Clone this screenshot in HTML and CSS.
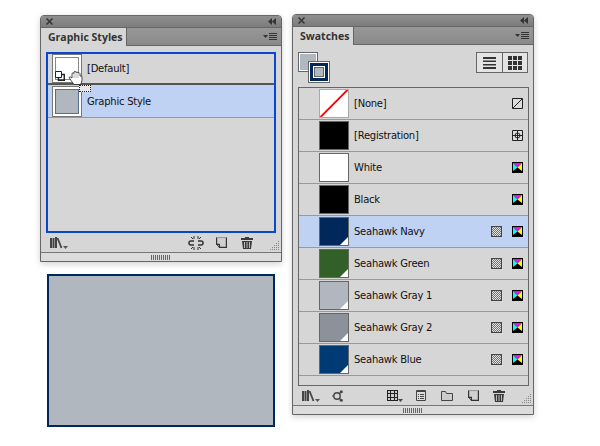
FILE: index.html
```html
<!DOCTYPE html>
<html lang="en">
<head>
<meta charset="utf-8">
<title>Graphic Styles and Swatches</title>
<link rel="stylesheet" href="styles.css">
</head>
<body>
<svg class="defs" width="0" height="0" aria-hidden="true">
  <symbol id="i-lib" viewBox="0 0 18 12"><path fill="#444" d="M0 1h2v10H0zM2.500 1h2v10h-2zM5 0h2v11H5z"/><path fill="none" stroke="#444" stroke-width="1.800" d="M7.500 1l4 10"/><path fill="#555" d="M13 9h5l-2.500 3z"/></symbol>
  <symbol id="i-new" viewBox="0 0 11 11"><path fill="#d0d0d0" stroke="#888" d="M.5 .5h10"/><path fill="#d0d0d0" stroke="#333" stroke-width="1.200" d="M.6 .6v6.800h2.800v3h7V.6"/><path fill="#d0d0d0" stroke="#333" d="M.6 7.400l3 3"/><path fill="none" stroke="#999" d="M1 .6h9"/></symbol>
  <symbol id="i-trash" viewBox="0 0 12 12"><path fill="#3a3a3a" d="M4 0h4v1h4v2H0V1h4z"/><path fill="#3a3a3a" d="M1 4h10l-1 8H2z"/><path fill="#bbb" d="M3 5h1v6H3zM5.500 5h1v6h-1zM8 5h1v6H8z"/></symbol>
  <symbol id="i-break" viewBox="0 0 16 14"><path fill="none" stroke="#333" stroke-width="1.500" d="M6 5H3Q1 5 1 7t2 2h3M10 5h3q2 0 2 2t-2 2h-3"/><path fill="none" stroke="#333" d="M6 0v3M10 0v3M6 11v3M10 11v3M3 1l2 2M13 1l-2 2M3 13l2-2M13 13l-2-2"/></symbol>
  <symbol id="i-cmyk" viewBox="0 0 11 11"><path fill="#000" d="M0 0h11v11H0z"/><path fill="#f0f" d="M1 1h9L5.500 5.500z"/><path fill="#0ff" d="M1 1v8l4.500-3.500z"/><path fill="#ff0" d="M10 1v8L5.500 5.500z"/></symbol>
  <symbol id="i-global" viewBox="0 0 11 11"><path fill="#444" d="M0 0h11v11H0z"/><path fill="#ddd" d="M1 1h9v9H1z"/><path fill="#777" d="M1 1h1v1H1zM3 1h1v1H3zM5 1h1v1H5zM7 1h1v1H7zM9 1h1v1H9zM2 2h1v1H2zM4 2h1v1H4zM6 2h1v1H6zM8 2h1v1H8zM1 3h1v1H1zM3 3h1v1H3zM5 3h1v1H5zM7 3h1v1H7zM9 3h1v1H9zM2 4h1v1H2zM4 4h1v1H4zM6 4h1v1H6zM8 4h1v1H8zM1 5h1v1H1zM3 5h1v1H3zM5 5h1v1H5zM7 5h1v1H7zM9 5h1v1H9zM2 6h1v1H2zM4 6h1v1H4zM6 6h1v1H6zM8 6h1v1H8zM1 7h1v1H1zM3 7h1v1H3zM5 7h1v1H5zM7 7h1v1H7zM9 7h1v1H9zM2 8h1v1H2zM4 8h1v1H4zM6 8h1v1H6zM8 8h1v1H8zM1 9h1v1H1zM3 9h1v1H3zM5 9h1v1H5zM7 9h1v1H7zM9 9h1v1H9z"/></symbol>
  <symbol id="i-menu" viewBox="0 0 14 7"><path fill="#333" d="M0 2h5L2.500 5zM6 0h8v1H6zM6 2h8v1H6zM6 4h8v1H6zM6 6h8v1H6z"/></symbol>
  <symbol id="i-x" viewBox="0 0 7 7"><path fill="none" stroke="#333" stroke-width="1.500" d="M.5 .5l6 6M6.500 .5l-6 6"/></symbol>
  <symbol id="i-col" viewBox="0 0 8 7"><path fill="#333" d="M4 0v7L0 3.500zM8 0v7L4 3.500z"/></symbol>
  <symbol id="i-corner" viewBox="0 0 10 10"><path fill="#888" d="M8 0h1v1H8zM6 2h1v1H6zM8 2h1v1H8zM4 4h1v1H4zM6 4h1v1H6zM8 4h1v1H8zM2 6h1v1H2zM4 6h1v1H4zM6 6h1v1H6zM8 6h1v1H8zM0 8h1v1H0zM2 8h1v1H2zM4 8h1v1H4zM6 8h1v1H6zM8 8h1v1H8z"/></symbol>
  <symbol id="i-grip" viewBox="0 0 20 5"><path fill="#666" d="M0 0h1v5H0zM2 0h1v5H2zM4 0h1v5H4zM6 0h1v5H6zM8 0h1v5H8zM10 0h1v5h-1zM12 0h1v5h-1zM14 0h1v5h-1zM16 0h1v5h-1zM18 0h1v5h-1z"/></symbol>
</svg>

<main class="stage">
  <div class="col-left">
    <section class="panel panel-styles">
      <div class="titlebar"><svg class="tb-x"><use href="#i-x"/></svg><svg class="tb-col"><use href="#i-col"/></svg></div>
      <div class="tabrow"><div class="tab tab-styles">Graphic Styles</div><svg class="tab-menu"><use href="#i-menu"/></svg></div>
      <div class="styles-box">
        <div class="style-row style-default">
          <div class="style-thumb"><div class="style-inner"></div>
            <svg class="thumb-badge" viewBox="0 0 10 10"><path fill="#fff" stroke="#222" d="M.5 .5h6v6h-6z"/><path fill="none" stroke="#222" stroke-width="1.500" d="M7 3.500h2.300v5.800H3.500V7"/></svg>
          </div>
          <span class="style-name">[Default]</span>
        </div>
        <div class="style-row style-selected">
          <div class="style-thumb"><div class="style-inner style-inner-gray"></div></div>
          <span class="style-name">Graphic Style</span>
        </div>
        <svg class="hand" viewBox="0 0 16 16"><path fill="#fff" stroke="#222" stroke-width=".8" d="M1 8.500Q2 7 4 9V4.500q1-1.500 2 0V3q1-1.500 2 0v.5q1-1 2 0V4q1.500-.8 2 .5V7q2-.5 2 1v3q0 2-1.500 4.500H6Q4 13 1 8.500z"/><path fill="none" stroke="#999" stroke-width=".7" d="M6 4.500V9M8 3.500V9M10 4V9"/></svg>
        <div class="drag-ghost"></div>
      </div>
      <div class="footer footer-styles">
        <svg class="f-lib"><use href="#i-lib"/></svg>
        <svg class="f-break"><use href="#i-break"/></svg>
        <svg class="f-new"><use href="#i-new"/></svg>
        <svg class="f-trash"><use href="#i-trash"/></svg>
        <svg class="corner"><use href="#i-corner"/></svg>
      </div>
      <div class="strip"><svg class="grip"><use href="#i-grip"/></svg></div>
    </section>
    <div class="preview"></div>
  </div>

  <section class="panel panel-swatches">
    <div class="titlebar"><svg class="tb-x"><use href="#i-x"/></svg><svg class="tb-col"><use href="#i-col"/></svg></div>
    <div class="tabrow"><div class="tab tab-swatches">Swatches</div><svg class="tab-menu"><use href="#i-menu"/></svg></div>
    <div class="sw-top">
      <div class="fillstroke">
        <div class="fill-box"></div>
        <div class="stroke-box"><div class="stroke-hole"></div></div>
      </div>
      <div class="view-toggle">
        <div class="view-btn view-list">
          <svg viewBox="0 0 13 12" width="13" height="12"><path fill="#333" d="M0 0h13v2H0zM0 3.500h13v1.500H0zM0 7h13v1.500H0zM0 10h13v2H0z"/></svg>
        </div>
        <div class="view-btn">
          <svg viewBox="0 0 14 14" width="14" height="14"><path fill="#333" d="M0 0h4v4H0zM5 0h4v4H5zM10 0h4v4h-4zM0 5h4v4H0zM5 5h4v4H5zM10 5h4v4h-4zM0 10h4v4H0zM5 10h4v4H5zM10 10h4v4h-4z"/></svg>
        </div>
      </div>
    </div>
    <div class="sw-list">
      <div class="sw-row">
        <div class="sw-thumb sw-none"><svg viewBox="0 0 28 28"><path stroke="#f00" stroke-width="2" d="M0 28L28 0"/></svg></div>
        <span class="sw-name">[None]</span>
        <svg class="sw-icon" viewBox="0 0 11 11"><path fill="#ddd" stroke="#222" d="M.5 .5h10v10H.5z"/><path stroke="#222" d="M1 10L10 1"/></svg>
      </div>
      <div class="sw-row">
        <div class="sw-thumb sw-black"></div>
        <span class="sw-name">[Registration]</span>
        <svg class="sw-icon" viewBox="0 0 11 11"><path fill="#ddd" stroke="#222" d="M.5 .5h10v10H.5z"/><circle cx="5.500" cy="5.500" r="2.500" fill="none" stroke="#222"/><path stroke="#222" d="M5.500 1v9M1 5.500h9"/></svg>
      </div>
      <div class="sw-row">
        <div class="sw-thumb sw-white"></div>
        <span class="sw-name">White</span>
        <svg class="sw-icon"><use href="#i-cmyk"/></svg>
      </div>
      <div class="sw-row">
        <div class="sw-thumb sw-black"></div>
        <span class="sw-name">Black</span>
        <svg class="sw-icon"><use href="#i-cmyk"/></svg>
      </div>
      <div class="sw-row sw-selected">
        <div class="sw-thumb sw-navy sw-global"></div>
        <span class="sw-name">Seahawk Navy</span>
        <svg class="sw-icon sw-icon-g"><use href="#i-global"/></svg>
        <svg class="sw-icon"><use href="#i-cmyk"/></svg>
      </div>
      <div class="sw-row">
        <div class="sw-thumb sw-green sw-global"></div>
        <span class="sw-name">Seahawk Green</span>
        <svg class="sw-icon sw-icon-g"><use href="#i-global"/></svg>
        <svg class="sw-icon"><use href="#i-cmyk"/></svg>
      </div>
      <div class="sw-row">
        <div class="sw-thumb sw-gray1 sw-global"></div>
        <span class="sw-name">Seahawk Gray 1</span>
        <svg class="sw-icon sw-icon-g"><use href="#i-global"/></svg>
        <svg class="sw-icon"><use href="#i-cmyk"/></svg>
      </div>
      <div class="sw-row">
        <div class="sw-thumb sw-gray2 sw-global"></div>
        <span class="sw-name">Seahawk Gray 2</span>
        <svg class="sw-icon sw-icon-g"><use href="#i-global"/></svg>
        <svg class="sw-icon"><use href="#i-cmyk"/></svg>
      </div>
      <div class="sw-row">
        <div class="sw-thumb sw-blue sw-global"></div>
        <span class="sw-name">Seahawk Blue</span>
        <svg class="sw-icon sw-icon-g"><use href="#i-global"/></svg>
        <svg class="sw-icon"><use href="#i-cmyk"/></svg>
      </div>
    </div>
    <div class="footer footer-swatches">
      <svg class="f-lib"><use href="#i-lib"/></svg>
      <svg class="f-opts" viewBox="0 0 11 12"><circle cx="5" cy="6" r="3.200" fill="none" stroke="#444" stroke-width="1.400"/><path stroke="#444" stroke-width="1.200" d="M7 4l2-2M7 8l2 2M0 6h2"/><circle cx="9.300" cy="1.800" r="1.500" fill="#444"/><circle cx="9.300" cy="10.200" r="1.500" fill="#444"/></svg>
      <svg class="f-grid" viewBox="0 0 16 12"><path fill="#222" d="M0 0h11v11H0z"/><path fill="#ccc" d="M1 1h2v2H1zM4 1h3v2H4zM8 1h2v2H8zM1 4h2v3H1zM4 4h3v3H4zM8 4h2v3H8zM1 8h2v2H1zM4 8h3v2H4zM8 8h2v2H8z"/><path fill="#444" d="M11 9h5l-2.500 3z"/></svg>
      <svg class="f-list" viewBox="0 0 10 11"><path fill="#ddd" stroke="#444" d="M.5 .5h9v10h-9z"/><path fill="#444" d="M1 1h8v1H1zM2 4h1v1H2zM4 4h4v1H4zM2 6h1v1H2zM4 6h4v1H4zM2 8h1v1H2zM4 8h4v1H4z"/></svg>
      <svg class="f-folder" viewBox="0 0 12 10"><path fill="#ccc" stroke="#444" d="M.5 9.500V.5h4l1 2h6v7z"/></svg>
      <svg class="f-new"><use href="#i-new"/></svg>
      <svg class="f-trash"><use href="#i-trash"/></svg>
      <svg class="corner"><use href="#i-corner"/></svg>
    </div>
    <div class="strip"><svg class="grip"><use href="#i-grip"/></svg></div>
  </section>
</main>
</body>
</html>
```
FILE: styles.css
```css
* { box-sizing: border-box; }
html, body { margin: 0; padding: 0; background: #fff; }
body { width: 600px; height: 446px; overflow: hidden; font-family: "DejaVu Sans", sans-serif; font-size: 10px; color: #111; }
svg { display: block; }
.defs { position: absolute; }

.stage { display: flex; align-items: flex-start; padding: 14px 0 0 40px; gap: 10px; }
.col-left { display: flex; flex-direction: column; margin-top: 1px; width: 242px; }

.panel { width: 242px; background: #d6d6d6; border: 1px solid #666; border-radius: 4px 4px 0 0; box-shadow: 0 2px 6px rgba(0,0,0,.18); position: relative; }

.titlebar { height: 12px; background: linear-gradient(#8f8f8f, #7c7c7c); border-bottom: 1px solid #666; border-radius: 3px 3px 0 0; display: flex; justify-content: space-between; align-items: center; padding: 0 5px 0 5px; }
.tb-x { width: 7px; height: 7px; }
.tb-col { width: 8px; height: 7px; }

.tabrow { height: 18px; background: linear-gradient(#979797, #8a8a8a); border-bottom: 1px solid #666; display: flex; justify-content: space-between; align-items: center; padding-right: 4px; }
.tab { height: 18px; background: #d6d6d6; border-right: 1px solid #666; font-family: "Open Sans", sans-serif; font-weight: bold; font-size: 10.5px; color: #333; display: flex; align-items: center; padding-left: 7px; white-space: nowrap; }
.tab-styles { width: 86px; }
.tab-swatches { width: 61px; }
.tab-menu { width: 14px; height: 7px; }

.styles-box { position: relative; width: 230px; height: 181px; margin: 6px 0 0 5px; border: 2px solid #0a47cf; }
.style-row { display: flex; align-items: center; gap: 5px; padding-left: 4px; }
.style-default { height: 31px; border-bottom: 2px solid #555; }
.style-selected { height: 33px; background: #bfd2f3; border-bottom: 1px solid #999; }
.style-thumb { position: relative; width: 30px; height: 29px; background: #fff; border: 1px solid #777; padding: 2px; }
.style-selected .style-thumb { height: 31px; }
.style-inner { width: 100%; height: 100%; border: 1px solid #888; background: #fff; }
.style-inner-gray { background: #b0b7bf; border-color: #5a6d8c; }
.thumb-badge { position: absolute; left: 2px; bottom: 1px; width: 10px; height: 10px; }
.style-name { letter-spacing: -.25px; }
.hand { position: absolute; left: 20px; top: 15px; width: 16px; height: 16px; }
.drag-ghost { position: absolute; left: 31px; top: 31px; width: 12px; height: 7px; border: 1px dotted #222; background: #e8e8e8; }

.footer { position: relative; height: 19px; display: flex; align-items: center; padding-left: 9px; }
.footer svg { flex: none; }
.f-lib { width: 18px; height: 12px; }
.f-new { width: 11px; height: 11px; }
.f-trash { width: 12px; height: 12px; }
.f-break { width: 16px; height: 14px; }
.footer-styles .f-break { margin-left: auto; }
.footer-styles .f-new { margin-left: 12px; }
.footer-styles .f-trash { margin-left: 14px; margin-right: 28px; }
.f-opts { width: 11px; height: 12px; margin-left: 12px; }
.f-grid { width: 16px; height: 12px; margin-left: auto; }
.f-list { width: 10px; height: 11px; margin-left: 13px; }
.f-folder { width: 12px; height: 10px; margin-left: 15px; }
.footer-swatches .f-new { margin-left: 15px; }
.footer-swatches .f-trash { margin-left: 14px; margin-right: 28px; }
.corner { position: absolute; right: 1px; bottom: 1px; width: 10px; height: 10px; }

.strip { height: 9px; border-top: 1px solid #777; background: #dcdcdc; display: flex; align-items: center; justify-content: center; }
.grip { width: 20px; height: 5px; }

.preview { width: 228px; height: 153px; margin: 12px 0 0 7px; background: #b0b7bf; border: 2px solid #00285b; }

.sw-top { height: 42px; position: relative; display: flex; justify-content: space-between; padding: 7px 5px 0 5px; }
.fillstroke { position: relative; width: 32px; height: 32px; }
.fill-box { width: 20px; height: 20px; background: #b0b7bf; border: 1px solid #666; box-shadow: inset 0 0 0 1px #fff; }
.stroke-box { position: absolute; left: 10px; top: 9px; width: 22px; height: 22px; background: #00285b; border: 1px solid #666; box-shadow: inset 0 0 0 1px #fff; display: flex; align-items: center; justify-content: center; }
.stroke-hole { width: 10px; height: 10px; background: #b0b7bf; border: 1px solid #666; box-shadow: 0 0 0 1px #fff; }
.view-toggle { display: flex; width: 52px; height: 21px; border: 1px solid #666; background: #e4e4e4; }
.view-btn { flex: 1; display: flex; align-items: center; justify-content: center; }
.view-list { border-right: 1px solid #666; }

.sw-list { width: 231px; height: 299px; margin-left: 5px; border: 1px solid #666; }
.sw-row { height: 32px; display: flex; align-items: flex-start; padding: 1px 5px 0 20px; border-bottom: 1px solid #999; }
.sw-thumb { position: relative; width: 30px; height: 29px; border: 1px solid #666; flex: none; }
.sw-selected { background: #bfd2f3; }
.sw-name { margin: 0 auto 0 5px; line-height: 29px; letter-spacing: -.25px; }
.sw-icon { width: 11px; height: 11px; margin-top: 9px; flex: none; }
.sw-icon-g { margin-right: 10px; }
.sw-none { background: #fff; border-color: #aaa; }
.sw-none svg { width: 100%; height: 100%; }
.sw-black { background: #000; }
.sw-white { background: #fff; }
.sw-navy { background: #00285b; }
.sw-green { background: #336029; }
.sw-gray1 { background: #b0b7bf; }
.sw-gray2 { background: #8c929a; }
.sw-blue { background: #003a75; }
.sw-global::after { content: ""; position: absolute; right: 0; bottom: 0; width: 0; height: 0; border-style: solid; border-width: 0 0 8px 8px; border-color: transparent transparent #fff transparent; }
```
